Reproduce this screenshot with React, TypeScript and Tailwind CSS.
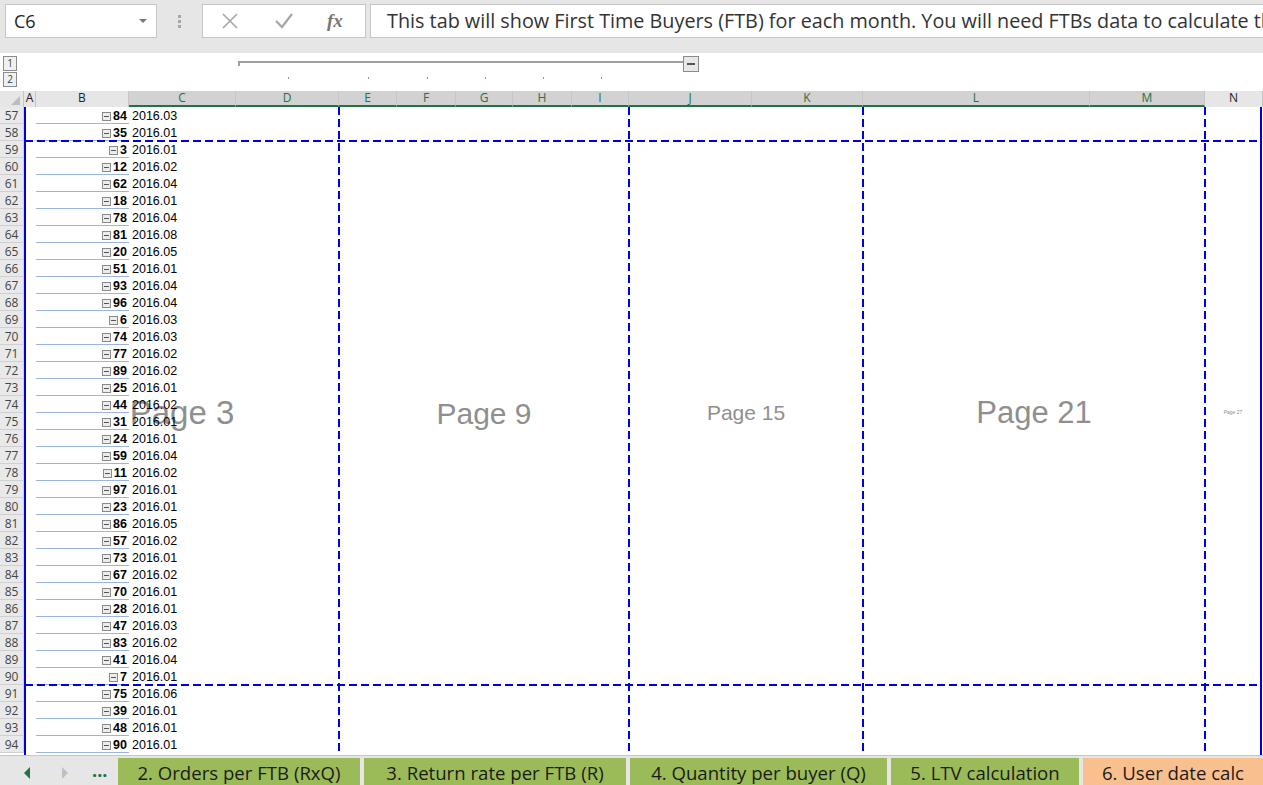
import React from 'react';

const rows: [number, number, string][] = [
  [57, 84, '2016.03'], [58, 35, '2016.01'], [59, 3, '2016.01'], [60, 12, '2016.02'],
  [61, 62, '2016.04'], [62, 18, '2016.01'], [63, 78, '2016.04'], [64, 81, '2016.08'],
  [65, 20, '2016.05'], [66, 51, '2016.01'], [67, 93, '2016.04'], [68, 96, '2016.04'],
  [69, 6, '2016.03'], [70, 74, '2016.03'], [71, 77, '2016.02'], [72, 89, '2016.02'],
  [73, 25, '2016.01'], [74, 44, '2016.02'], [75, 31, '2016.01'], [76, 24, '2016.01'],
  [77, 59, '2016.04'], [78, 11, '2016.02'], [79, 97, '2016.01'], [80, 23, '2016.01'],
  [81, 86, '2016.05'], [82, 57, '2016.02'], [83, 73, '2016.01'], [84, 67, '2016.02'],
  [85, 70, '2016.01'], [86, 28, '2016.01'], [87, 47, '2016.03'], [88, 83, '2016.02'],
  [89, 41, '2016.04'], [90, 7, '2016.01'], [91, 75, '2016.06'], [92, 39, '2016.01'],
  [93, 48, '2016.01'], [94, 90, '2016.01'],
];

const cols = [
  { l: 'A', w: 'w-[12px]', sel: false },
  { l: 'B', w: 'w-[93px]', sel: false },
  { l: 'C', w: 'w-[107px]', sel: true },
  { l: 'D', w: 'w-[103px]', sel: true },
  { l: 'E', w: 'w-[58px]', sel: true },
  { l: 'F', w: 'w-[59px]', sel: true },
  { l: 'G', w: 'w-[57px]', sel: true },
  { l: 'H', w: 'w-[59px]', sel: true },
  { l: 'I', w: 'w-[57px]', sel: true },
  { l: 'J', w: 'w-[123px]', sel: true },
  { l: 'K', w: 'w-[111px]', sel: true },
  { l: 'L', w: 'w-[227px]', sel: true },
  { l: 'M', w: 'w-[115px]', sel: true },
  { l: 'N', w: 'flex-1', sel: false },
];

const tabs = [
  { label: '2. Orders per FTB (RxQ)', w: 'w-[242px]', bg: 'bg-[#9bbb59]' },
  { label: '3. Return rate per FTB (R)', w: 'w-[262px]', bg: 'bg-[#9bbb59]' },
  { label: '4. Quantity per buyer (Q)', w: 'w-[257px]', bg: 'bg-[#9bbb59]' },
  { label: '5. LTV calculation', w: 'w-[188px]', bg: 'bg-[#9bbb59]' },
  { label: '6. User date calc', w: 'flex-1', bg: 'bg-[#fabf8f]' },
];

const vDash = 'absolute top-0 bottom-0 w-[2px] bg-[repeating-linear-gradient(to_bottom,#0000e6_0px,#0000e6_8px,transparent_8px,transparent_12px)]';
const hDash = 'absolute left-[25px] w-[1236px] h-[2px] bg-[repeating-linear-gradient(to_right,#0000e6_0px,#0000e6_8px,transparent_8px,transparent_12px)]';

const MinusBox = () => (
  <span className="inline-flex items-center justify-center w-[9px] h-[9px] border border-[#8a8a8a] bg-[#ececec] mr-[2px]">
    <span className="block w-[5px] h-px bg-[#555]" />
  </span>
);

const FormulaBar = () => (
  <div className="h-[53px] bg-[#e6e6e6] pt-[4px] flex items-start">
    <div className="ml-[5px] w-[152px] h-[34px] bg-white border border-[#c6c6c6] flex items-center justify-between pl-[8px] pr-[9px]">
      <span className="text-[18px] text-[#222]">C6</span>
      <span className="w-0 h-0 border-l-[4px] border-r-[4px] border-t-[4px] border-l-transparent border-r-transparent border-t-[#777]" />
    </div>
    <div className="w-[45px] h-[34px] flex flex-col items-center justify-center gap-[2px]">
      <span className="w-[3px] h-[3px] bg-[#a6a6a6]" />
      <span className="w-[3px] h-[3px] bg-[#a6a6a6]" />
      <span className="w-[3px] h-[3px] bg-[#a6a6a6]" />
    </div>
    <div className="w-[164px] h-[34px] bg-white border border-[#c6c6c6] flex items-center">
      <svg width="20" height="20" viewBox="0 0 20 20" className="ml-[17px]">
        <path d="M3 3 L17 17 M17 3 L3 17" stroke="#a6a6a6" strokeWidth="1.6" />
      </svg>
      <svg width="20" height="20" viewBox="0 0 20 20" className="ml-[34px]">
        <path d="M2 10 L8 16 L18 3" stroke="#a6a6a6" strokeWidth="2.2" fill="none" />
      </svg>
      <span className="ml-[33px] text-[19px] italic text-[#777] font-['Liberation_Serif',serif] font-bold">fx</span>
    </div>
    <div className="ml-[4px] flex-1 h-[34px] bg-white border border-[#c6c6c6] border-r-0 flex items-center pl-[16px] overflow-hidden">
      <span className="text-[19.8px] text-[#333] whitespace-nowrap">
        This tab will show First Time Buyers (FTB) for each month. You will need FTBs data to calculate the Lifetime Value of each cohort.
      </span>
    </div>
  </div>
);

const OutlineBand = () => (
  <div className="relative h-[38px] bg-white">
    <div className="absolute left-[3px] top-[3px] w-[14px] h-[15px] border border-[#8c8c8c] bg-[#f0f0f0] text-[10px] leading-[13px] text-center text-[#444]">1</div>
    <div className="absolute left-[3px] top-[19px] w-[14px] h-[15px] border border-[#8c8c8c] bg-[#f0f0f0] text-[10px] leading-[13px] text-center text-[#444]">2</div>
    <div className="absolute left-[238px] top-[8px] w-[446px] h-[2px] bg-[#a0a0a0]" />
    <div className="absolute left-[238px] top-[8px] w-[2px] h-[5px] bg-[#a0a0a0]" />
    <div className="absolute left-[683px] top-[3px] w-[16px] h-[16px] border border-[#8c8c8c] bg-[#e8e8e8] flex items-center justify-center">
      <span className="block w-[8px] h-[2px] bg-[#555]" />
    </div>
    {[288, 368, 427, 485, 543, 601].map((x) => (
      <div key={x} className="absolute top-[24px] w-[1px] h-[2px] bg-[#999]" style={{ left: x }} />
    ))}
  </div>
);

const ColumnHeaders = () => (
  <div className="flex h-[16px] bg-[#e6e6e6] text-[12px] leading-[14px]">
    <div className="w-[24px] relative border-r border-[#c6c6c6]">
      <span className="absolute right-[3px] bottom-[2px] w-0 h-0 [border-bottom:9px_solid_#bdbdbd] [border-left:9px_solid_transparent]" />
    </div>
    {cols.map((c) => (
      <div
        key={c.l}
        className={
          c.w +
          ' border-r border-[#c6c6c6] text-center ' +
          (c.sel ? 'bg-[#d2d2d2] text-[#217346] border-b-2 border-b-[#217346]' : 'text-[#222]')
        }
      >
        {c.l}
      </div>
    ))}
  </div>
);

const Sheet = () => (
  <div className="relative h-[648px] overflow-hidden bg-white font-['Liberation_Sans',Arial,sans-serif]">
    {/* page watermarks */}
    <div className="absolute left-[25px] top-[34px] w-[314px] h-[544px] flex items-center justify-center text-[33px] text-[#8f8f8f]">Page 3</div>
    <div className="absolute left-[339px] top-[34px] w-[290px] h-[544px] flex items-center justify-center text-[30px] text-[#8f8f8f]">Page 9</div>
    <div className="absolute left-[629px] top-[34px] w-[234px] h-[544px] flex items-center justify-center text-[21px] text-[#8f8f8f]">Page 15</div>
    <div className="absolute left-[863px] top-[34px] w-[342px] h-[544px] flex items-center justify-center text-[31px] text-[#8f8f8f]">Page 21</div>
    <div className="absolute left-[1205px] top-[34px] w-[56px] h-[544px] flex items-center justify-center text-[5px] text-[#8f8f8f]">Page 27</div>

    <div className="relative">
      {rows.map(([r, n, d]) => (
        <div key={r} className="flex h-[17px] text-[12.5px] leading-[19px]">
          <div className="w-[24px] shrink-0 bg-[#e9e9e9] border-r border-b border-[#d0d0d0] text-center text-[#444] text-[12px] font-['Open_Sans',sans-serif] leading-[18px]">
            {r}
          </div>
          <div className="w-[12px] shrink-0" />
          <div className="w-[93px] shrink-0 border-b border-[#9ab6df] flex items-center justify-end pr-[2px] pt-[2px] font-bold text-black">
            <MinusBox />
            {n}
          </div>
          <div className="w-[107px] shrink-0 pl-[3px] text-black">{d}</div>
          <div className="flex-1" />
        </div>
      ))}
    </div>

    {/* page borders */}
    <div className="absolute left-[24px] top-0 bottom-0 w-[2px] bg-[#0000e6]" />
    <div className="absolute left-[1260px] top-0 bottom-0 w-[2px] bg-[#0000e6]" />
    <div className={vDash + ' left-[338px]'} />
    <div className={vDash + ' left-[628px]'} />
    <div className={vDash + ' left-[862px]'} />
    <div className={vDash + ' left-[1204px]'} />
    <div className={hDash + ' top-[33px]'} />
    <div className={hDash + ' top-[577px]'} />
  </div>
);

const TabBar = () => (
  <div className="h-[32px] bg-[#e6e6e6] border-t border-[#c6c6c6] flex pt-[2px] font-['Open_Sans',sans-serif]">
    <div className="w-[118px] shrink-0 flex items-center">
      <span className="ml-[24px] w-0 h-0 border-t-[6px] border-b-[6px] border-r-[6px] border-t-transparent border-b-transparent border-r-[#217346]" />
      <span className="ml-[32px] w-0 h-0 border-t-[6px] border-b-[6px] border-l-[6px] border-t-transparent border-b-transparent border-l-[#c0c0c0]" />
      <span className="ml-[24px] text-[18px] font-bold text-[#217346] leading-none -mt-[6px]">...</span>
    </div>
    <div className="flex flex-1 gap-[4px]">
      {tabs.map((t) => (
        <div key={t.label} className={t.w + ' ' + t.bg + ' flex items-center justify-center text-[18.6px] text-[#1b1b1b] whitespace-nowrap'}>
          {t.label}
        </div>
      ))}
    </div>
  </div>
);

export default function App() {
  return (
    <div className="w-[1263px] h-[785px] overflow-hidden bg-white font-['Open_Sans',sans-serif]">
      <FormulaBar />
      <OutlineBand />
      <ColumnHeaders />
      <Sheet />
      <TabBar />
    </div>
  );
}
